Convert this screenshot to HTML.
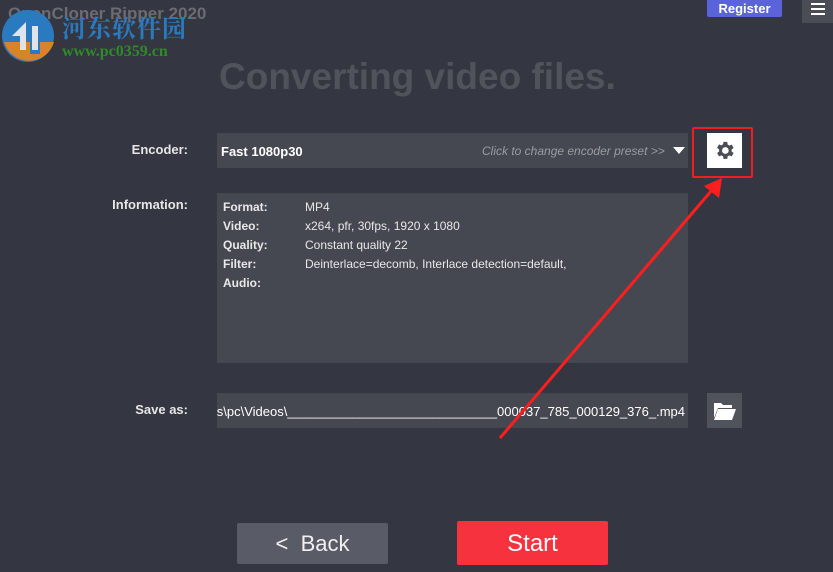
<!DOCTYPE html>
<html><head><meta charset="utf-8"><style>
*{margin:0;padding:0;box-sizing:border-box}
body{width:833px;height:572px;background:#343741;position:relative;overflow:hidden;font-family:"Liberation Sans",Arial,sans-serif;color:#fff}
.a{position:absolute}
.lbl{position:absolute;font-size:13px;font-weight:bold;color:#e6e6e6;text-align:right;width:120px}
.panel{position:absolute;background:#454850}
.info div{position:absolute;font-size:12px;color:#e8e8e8}
</style></head><body>
<div class="a" style="left:8px;top:4px;font-size:17px;font-weight:bold;color:#6a6c72">OpenCloner Ripper 2020</div>
<svg class="a" style="left:0;top:6px" width="60" height="58" viewBox="0 0 60 58">
<circle cx="28" cy="30" r="26" fill="#2a7ac0"/>
<path d="M4 36 A26 26 0 0 0 54 36 L40 36 L40 48 L30 48 L30 36 Z" fill="#d7832b"/>
<path d="M12 30 L26 16 L26 44 L20 44 L20 30 Z M32 20 L38 20 L38 44 L32 44 Z" fill="#dfe4ea"/>
</svg>
<div class="a" style="left:62px;top:9px;font-size:24px;font-weight:bold;color:#2a7ac0;font-family:'Noto Serif CJK SC','Noto Sans CJK SC',serif;letter-spacing:1px">河东软件园</div>
<div class="a" style="left:62px;top:43px;font-size:16px;font-weight:bold;color:#2f8a2a;font-family:'Liberation Serif',serif">www.pc0359.cn</div>
<div class="a" style="left:707px;top:0;width:75px;height:17px;background:#5b63db;border-radius:0 0 2px 2px;font-size:13px;font-weight:bold;text-align:center;line-height:17px">Register</div>
<div class="a" style="left:802px;top:0;width:31px;height:23px;background:#4a4d55"></div>
<div class="a" style="left:811px;top:3px;width:14px;height:2px;background:#fff;box-shadow:0 5px 0 #fff,0 10px 0 #fff"></div>
<div class="a" style="left:219px;top:56px;font-size:37px;font-weight:bold;color:#50535c">Converting video files.</div>
<div class="lbl" style="left:68px;top:142px">Encoder:</div>
<div class="panel" style="left:217px;top:133px;width:471px;height:35px"></div>
<div class="a" style="left:221px;top:144px;font-size:13px;font-weight:bold">Fast 1080p30</div>
<div class="a" style="left:482px;top:144px;font-size:12px;font-style:italic;color:#9a9ca2">Click to change encoder preset &gt;&gt;</div>
<div class="a" style="left:673px;top:147px;width:0;height:0;border-left:6px solid transparent;border-right:6px solid transparent;border-top:7px solid #fff"></div>
<div class="a" style="left:692px;top:127px;width:61px;height:51px;border:2px solid #f01e1e;border-radius:2px"></div>
<div class="a" style="left:707px;top:133px;width:35px;height:35px;background:#fff"></div>
<svg class="a" style="left:713px;top:139px" width="23" height="23" viewBox="0 0 24 24"><path fill="#4a4d55" d="M19.4 13a7.5 7.5 0 0 0 0-2l2.1-1.6-2-3.5-2.5 1a7.6 7.6 0 0 0-1.7-1L14.9 3h-4l-.4 2.6a7.6 7.6 0 0 0-1.7 1l-2.5-1-2 3.5L6.4 11a7.5 7.5 0 0 0 0 2l-2.1 1.6 2 3.5 2.5-1a7.6 7.6 0 0 0 1.7 1l.4 2.6h4l.4-2.6a7.6 7.6 0 0 0 1.7-1l2.5 1 2-3.5zM12.9 15.5a3.5 3.5 0 1 1 0-7 3.5 3.5 0 0 1 0 7z"/></svg>
<div class="lbl" style="left:68px;top:197px">Information:</div>
<div class="panel info" style="left:217px;top:193px;width:471px;height:170px">
<div style="left:6px;top:7px;font-weight:bold">Format:</div><div style="left:88px;top:7px">MP4</div>
<div style="left:6px;top:26px;font-weight:bold">Video:</div><div style="left:88px;top:26px">x264, pfr, 30fps, 1920 x 1080</div>
<div style="left:6px;top:45px;font-weight:bold">Quality:</div><div style="left:88px;top:45px">Constant quality 22</div>
<div style="left:6px;top:64px;font-weight:bold">Filter:</div><div style="left:88px;top:64px">Deinterlace=decomb, Interlace detection=default,</div>
<div style="left:6px;top:83px;font-weight:bold">Audio:</div>
</div>
<div class="lbl" style="left:68px;top:402px">Save as:</div>
<div class="panel" style="left:217px;top:393px;width:471px;height:35px"></div>
<div class="a" style="left:217px;top:404px;width:468px;overflow:hidden;white-space:nowrap;font-size:13px;display:flex;justify-content:flex-end"><span style="flex:none">\Users\pc\Videos\_____________________________000037_785_000129_376_.mp4</span></div>
<div class="panel" style="left:707px;top:393px;width:35px;height:35px;background:#50535c"></div>
<svg class="a" style="left:713px;top:401px" width="24" height="20" viewBox="0 0 24 20"><path fill="#fff" d="M1 2h7l2 2h9v3H5L1 17z"/><path fill="#fff" d="M5 8h18l-4 11H1z"/></svg>
<svg class="a" style="left:0;top:0" width="833" height="572"><line x1="500" y1="438" x2="712" y2="190" stroke="#ff1e1e" stroke-width="3"/><polygon points="722,178 704,186 719,198" fill="#ff1e1e"/></svg>
<div class="a" style="left:237px;top:523px;width:151px;height:41px;background:#595c67;border-radius:2px;font-size:22px;line-height:41px;text-align:center;color:#f0f0f0">&lt;&nbsp; Back</div>
<div class="a" style="left:457px;top:521px;width:151px;height:44px;background:#f7323f;border-radius:2px;font-size:24px;line-height:45px;text-align:center">Start</div>
</body></html>
